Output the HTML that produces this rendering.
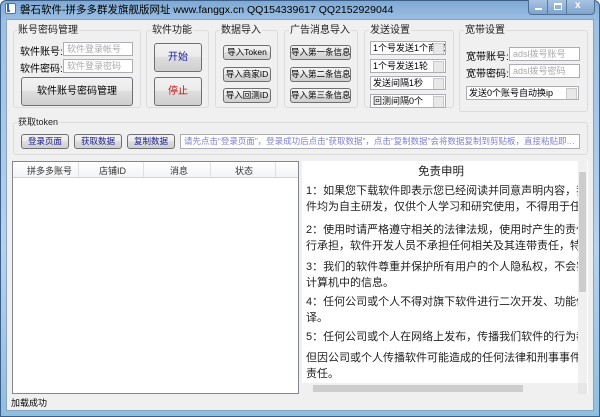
<!DOCTYPE html>
<html><head><meta charset="utf-8"><style>
*{margin:0;padding:0;box-sizing:border-box}
body{width:600px;height:417px;overflow:hidden;background:#fff;font-family:"Liberation Sans","Noto Sans CJK SC",sans-serif;font-size:10px;color:#000;position:relative}
.a{position:absolute;white-space:nowrap}
.frame{left:0;top:0;width:600px;height:417px;background:linear-gradient(180deg,#7fa9d4 0,#9dc0e4 20px,#b5d2ee 60%,#8fbfe0 100%);border:1px solid #3b5f88;border-radius:6px 6px 0 0}
.inner{left:6px;top:19px;width:588px;height:392px;background:#f0f0f0;border:1px solid #8aa4c0}
.grp{position:absolute;border:1px solid #dcdcdc;border-radius:3px;background:#f0f0f0}
.gt{position:absolute;font-size:10px;background:#f0f0f0;padding:0 1px;color:#222;white-space:nowrap;line-height:12px}
.btn{position:absolute;border:1px solid #707070;border-radius:3px;background:linear-gradient(#f2f2f2,#ebebeb 45%,#dddddd 50%,#cfcfcf);text-align:center;font-size:10px;color:#000;white-space:nowrap;overflow:hidden}
.sm{font-size:8.5px;line-height:13px}
.inp{position:absolute;background:#fff;border:1px solid #abadb3;color:#aaa;font-size:9px;padding-left:3px;line-height:12px;white-space:nowrap;overflow:hidden}
.spin{position:absolute;background:#fff;border:1px solid #abadb3;font-size:9px;padding-left:2px;line-height:12px;white-space:nowrap;overflow:hidden}
.spin:after{content:"";position:absolute;right:1px;top:1px;width:9px;height:10px;background:#e8e8e8;border:1px solid #c8c8c8}
.rt{position:absolute;left:306px;font-size:11px;line-height:16px;white-space:nowrap;overflow:hidden;color:#222}
</style></head><body>
<div class="a frame"></div>
<div class="a" style="left:5px;top:3px;width:11px;height:11px;background:#fff;border:1px solid #3a78c0;border-radius:2px"></div>
<div class="a" style="left:7px;top:4px;width:3px;height:8px;border-left:2px solid #2a6ab8;border-bottom:2px solid #2a6ab8"></div>
<div class="a" style="left:20px;top:2px;font-size:10.5px;color:#000">磐石软件-拼多多群发旗舰版网址 www.fanggx.cn QQ154339617 QQ2152929044</div>
<div class="a" style="left:528px;top:0;width:67px;height:15px;border:1px solid #4f6f96;border-top:none;border-radius:0 0 4px 4px;background:linear-gradient(#a8c4e2,#7ea4cc);overflow:hidden">
<div class="a" style="left:0;top:0;width:19px;height:14px;border-right:1px solid #5a7aa2"></div>
<div class="a" style="left:19px;top:0;width:19px;height:14px;border-right:1px solid #5a7aa2"></div>
<div class="a" style="left:6px;top:8px;width:7px;height:2px;background:#fff"></div>
<div class="a" style="left:25px;top:3px;width:8px;height:7px;border:1px solid #fff;border-top-width:2px"></div>
<div class="a" style="left:46px;top:0px;color:#fff;font-weight:bold;font-size:10px">x</div>
</div>
<div class="a inner"></div>

<div class="grp" style="left:13px;top:30px;width:128px;height:78px"></div>
<div class="gt" style="left:17px;top:25px">账号密码管理</div>
<div class="a" style="left:20px;top:43px">软件账号:</div>
<div class="inp" style="left:63px;top:42px;width:70px;height:14px">软件登录帐号</div>
<div class="a" style="left:20px;top:60px">软件密码:</div>
<div class="inp" style="left:63px;top:59px;width:70px;height:14px">软件登录密码</div>
<div class="btn" style="left:21px;top:77px;width:112px;height:29px;line-height:27px">软件账号密码管理</div>

<div class="grp" style="left:146px;top:30px;width:63px;height:78px"></div>
<div class="gt" style="left:151px;top:25px">软件功能</div>
<div class="btn" style="left:154px;top:43px;width:48px;height:29px;line-height:27px;color:#1a1aa0">开始</div>
<div class="btn" style="left:154px;top:77px;width:48px;height:29px;line-height:27px;color:#c01010">停止</div>

<div class="grp" style="left:215px;top:30px;width:63px;height:78px"></div>
<div class="gt" style="left:220px;top:25px">数据导入</div>
<div class="btn sm" style="left:223px;top:45px;width:48px;height:15px">导入Token</div>
<div class="btn sm" style="left:223px;top:67px;width:48px;height:15px">导入商家ID</div>
<div class="btn sm" style="left:223px;top:88px;width:48px;height:15px">导入回测ID</div>

<div class="grp" style="left:284px;top:30px;width:74px;height:78px"></div>
<div class="gt" style="left:289px;top:25px">广告消息导入</div>
<div class="btn sm" style="left:290px;top:45px;width:61px;height:15px">导入第一条信息</div>
<div class="btn sm" style="left:290px;top:67px;width:61px;height:15px">导入第二条信息</div>
<div class="btn sm" style="left:290px;top:88px;width:61px;height:15px">导入第三条信息</div>

<div class="grp" style="left:364px;top:30px;width:90px;height:78px"></div>
<div class="gt" style="left:369px;top:25px">发送设置</div>
<div class="spin" style="left:370px;top:41px;width:76px;height:14px">1个号发送1个商家</div>
<div class="spin" style="left:370px;top:59px;width:76px;height:14px">1个号发送1轮</div>
<div class="spin" style="left:370px;top:76px;width:76px;height:14px">发送间隔1秒</div>
<div class="spin" style="left:370px;top:94px;width:76px;height:14px">回测间隔0个</div>

<div class="grp" style="left:459px;top:30px;width:129px;height:82px"></div>
<div class="gt" style="left:464px;top:25px">宽带设置</div>
<div class="a" style="left:466px;top:48px">宽带账号:</div>
<div class="inp" style="left:509px;top:47px;width:71px;height:14px">adsl拨号账号</div>
<div class="a" style="left:466px;top:65px">宽带密码:</div>
<div class="inp" style="left:509px;top:64px;width:71px;height:14px">adsl拨号密码</div>
<div class="spin" style="left:466px;top:86px;width:113px;height:14px">发送0个账号自动换ip</div>

<div class="grp" style="left:13px;top:122px;width:575px;height:33px"></div>
<div class="gt" style="left:17px;top:116px;font-size:9px">获取token</div>
<div class="btn sm" style="left:21px;top:134px;width:48px;height:15px;color:#1a1a90">登录页面</div>
<div class="btn sm" style="left:74px;top:134px;width:48px;height:15px;color:#1a1a90">获取数据</div>
<div class="btn sm" style="left:127px;top:134px;width:48px;height:15px;color:#1a1a90">复制数据</div>
<div class="inp" style="left:180px;top:134px;width:400px;height:15px;color:#8080d0;font-size:8.5px;line-height:13px">请先点击“登录页面”，登录成功后点击“获取数据”，点击“复制数据”会将数据复制到剪贴板，直接粘贴即…</div>

<div class="a" style="left:12px;top:161px;width:287px;height:233px;background:#fff;border:1px solid #828790"></div>
<div class="a" style="left:13px;top:162px;width:285px;height:16px;background:linear-gradient(#fff,#f3f4f6);border-bottom:1px solid #d5d5d5;font-size:9px;color:#333">
<div class="a" style="left:14px;top:2px">拼多多账号</div><div class="a" style="left:65px;top:0;width:1px;height:15px;background:#e0e0e0"></div>
<div class="a" style="left:86px;top:2px">店铺ID</div><div class="a" style="left:130px;top:0;width:1px;height:15px;background:#e0e0e0"></div>
<div class="a" style="left:157px;top:2px">消息</div><div class="a" style="left:197px;top:0;width:1px;height:15px;background:#e0e0e0"></div>
<div class="a" style="left:222px;top:2px">状态</div><div class="a" style="left:262px;top:0;width:1px;height:15px;background:#e0e0e0"></div>
</div>

<div class="a" style="left:302px;top:161px;width:286px;height:233px;background:#fff"></div>
<div class="a" style="left:578px;top:161px;width:9px;height:222px;background:#f0f0f0"></div>
<div class="a" style="left:579px;top:172px;width:7px;height:120px;background:#cdcdcd;border-radius:1px"></div>
<div class="a" style="left:302px;top:383px;width:276px;height:11px;background:#f0f0f0"></div>
<div class="a" style="left:313px;top:385px;width:210px;height:7px;background:#cdcdcd"></div>
<div class="a" style="left:578px;top:383px;width:9px;height:11px;background:#e6e6e6"></div>
<div class="a" style="left:306px;top:163px;width:270px;text-align:center;font-size:11.5px;color:#222">免责申明</div>
<div class="rt" style="top:183px;width:272px">1：如果您下载软件即表示您已经阅读并同意声明内容，我们<br>件均为自主研发，仅供个人学习和研究使用，不得用于任何</div>
<div class="rt" style="top:222px;width:272px">2：使用时请严格遵守相关的法律法规，使用时产生的责任由<br>行承担，软件开发人员不承担任何相关及其连带责任，特此</div>
<div class="rt" style="top:259px;width:272px">3：我们的软件尊重并保护所有用户的个人隐私权，不会窃取<br>计算机中的信息。</div>
<div class="rt" style="top:294px;width:272px">4：任何公司或个人不得对旗下软件进行二次开发、功能修改<br>译。</div>
<div class="rt" style="top:329px;width:272px">5：任何公司或个人在网络上发布，传播我们软件的行为都允</div>
<div class="rt" style="top:350px;width:272px">但因公司或个人传播软件可能造成的任何法律和刑事事件我<br>责任。</div>

<div class="a" style="left:11px;top:396px;font-size:9px">加载成功</div>
</body></html>
